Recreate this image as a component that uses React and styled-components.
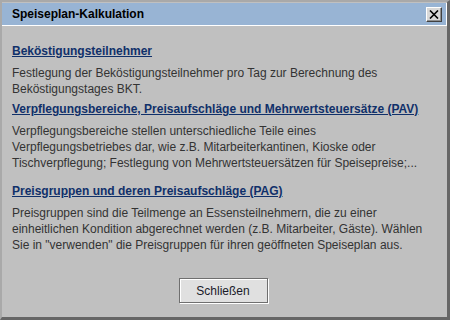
import React from "react";
import styled, { createGlobalStyle } from "styled-components";

const Global = createGlobalStyle`
  html, body { margin: 0; padding: 0; background: #c0c0c0; }
  * { box-sizing: border-box; }
`;

const Window = styled.div`
  width: 450px;
  height: 320px;
  display: flex;
  flex-direction: column;
  background: #c0c0c0;
  border-top: 2px solid #a9a9a9;
  border-left: 2px solid #a9a9a9;
  border-right: 3px solid #666666;
  border-bottom: 3px solid #666666;
  font-family: "Liberation Sans", Arial, sans-serif;
`;

const TitleBar = styled.div`
  height: 23px;
  margin: 1px 0 0 0;
  display: flex;
  align-items: center;
  justify-content: space-between;
  padding: 0 4px 0 10px;
  background: #98b4d4;
  border-bottom: 1px solid #ffffff;
  border-right: 1px solid #ffffff;
`;

const Title = styled.span`
  font-size: 12px;
  font-weight: bold;
  color: #000000;
`;

const CloseButton = styled.button`
  width: 16px;
  height: 15px;
  padding: 0;
  display: flex;
  align-items: center;
  justify-content: center;
  background: #d8d8d8;
  border: 1px solid;
  border-color: #ffffff #404040 #404040 #ffffff;
  box-shadow: inset -1px -1px 0 #909090;
`;

const Content = styled.div`
  flex: 1;
  display: flex;
  flex-direction: column;
  padding: 15px 10px 0 10px;
`;

const Section = styled.div`
  margin-bottom: ${(p) => p.gap}px;
`;

const Heading = styled.a`
  display: inline-block;
  font-size: 12px;
  line-height: 16px;
  font-weight: bold;
  color: #10306a;
  text-decoration: underline;
  margin-bottom: 6px;
`;

const Text = styled.p`
  margin: 0;
  font-size: 12px;
  line-height: 16px;
  color: #333333;
`;

const Footer = styled.div`
  margin-top: auto;
  display: flex;
  justify-content: center;
  padding-bottom: 14px;
`;

const Button = styled.button`
  width: 89px;
  height: 25px;
  margin-left: -3px;
  background: #e0e0e0;
  border: 1px solid #6f6f6f;
  box-shadow: 1px 1px 0 #ffffff, inset 1px 1px 0 #ffffff;
  font-family: "Liberation Sans", Arial, sans-serif;
  font-size: 12px;
  color: #1a1a2a;
`;

const sections = [
  {
    title: "Beköstigungsteilnehmer",
    text: "Festlegung der Beköstigungsteilnehmer pro Tag zur Berechnung des Beköstigungstages BKT.",
    gap: 2,
  },
  {
    title: "Verpflegungsbereiche, Preisaufschläge und Mehrwertsteuersätze (PAV)",
    text: "Verpflegungsbereiche stellen unterschiedliche Teile eines Verpflegungsbetriebes dar, wie z.B. Mitarbeiterkantinen, Kioske oder Tischverpflegung; Festlegung von Mehrwertsteuersätzen für Speisepreise;...",
    gap: 10,
  },
  {
    title: "Preisgruppen und deren Preisaufschläge (PAG)",
    text: 'Preisgruppen sind die Teilmenge an Essensteilnehmern, die zu einer einheitlichen Kondition abgerechnet werden (z.B. Mitarbeiter, Gäste). Wählen Sie in "verwenden" die Preisgruppen für ihren geöffneten Speiseplan aus.',
    gap: 0,
  },
];

export default function App() {
  return (
    <>
      <Global />
      <Window>
        <TitleBar>
          <Title>Speiseplan-Kalkulation</Title>
          <CloseButton aria-label="Schließen">
            <svg width="10" height="9" viewBox="0 0 10 9">
              <path d="M1 0.5 L9 8.5 M9 0.5 L1 8.5" stroke="#000" strokeWidth="1.6" />
            </svg>
          </CloseButton>
        </TitleBar>
        <Content>
          {sections.map((s) => (
            <Section key={s.title} gap={s.gap}>
              <Heading>{s.title}</Heading>
              <Text>{s.text}</Text>
            </Section>
          ))}
          <Footer>
            <Button>Schließen</Button>
          </Footer>
        </Content>
      </Window>
    </>
  );
}
